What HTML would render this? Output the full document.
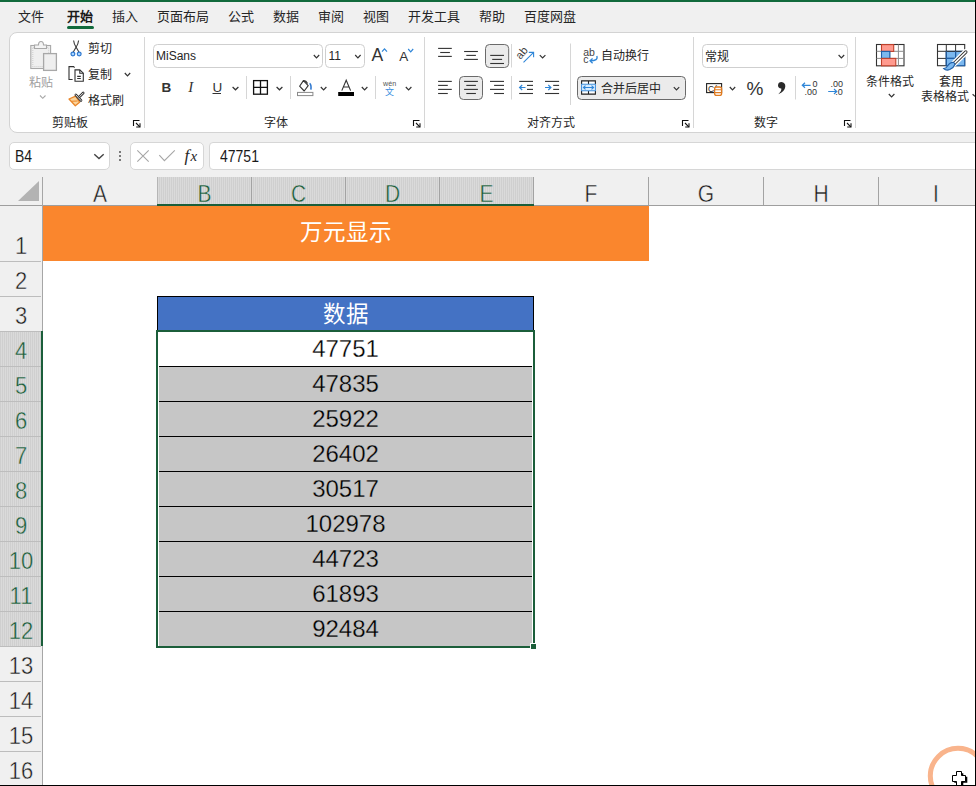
<!DOCTYPE html><html lang="zh-CN"><head><meta charset="utf-8"><style>
*{box-sizing:border-box;margin:0;padding:0}
html,body{width:976px;height:786px;overflow:hidden}
body{position:relative;background:#f0f0f0;font-family:"Liberation Sans",sans-serif;color:#262626}
.ab{position:absolute;white-space:nowrap}
.t{position:absolute;white-space:nowrap;font-size:13px;line-height:16px}
.r{position:absolute;white-space:nowrap;font-size:12px;line-height:16px;color:#262626}
.sep{position:absolute;width:1px;background:#d6d6d6}
.box{position:absolute;background:#fff;border:1px solid #d6d6d6;border-radius:5px}
svg{position:absolute;overflow:visible}
.ch{position:absolute;width:7px;height:4px}
</style></head><body>

<div class="ab" style="left:0;top:0;width:976px;height:2px;background:#116a3c"></div>
<div class="t" style="left:18px;top:9px;">文件</div>
<div class="t" style="left:67px;top:9px;font-weight:bold;color:#1a1a1a;">开始</div>
<div class="t" style="left:112px;top:9px;">插入</div>
<div class="t" style="left:157px;top:9px;">页面布局</div>
<div class="t" style="left:228px;top:9px;">公式</div>
<div class="t" style="left:273px;top:9px;">数据</div>
<div class="t" style="left:318px;top:9px;">审阅</div>
<div class="t" style="left:363px;top:9px;">视图</div>
<div class="t" style="left:408px;top:9px;">开发工具</div>
<div class="t" style="left:479px;top:9px;">帮助</div>
<div class="t" style="left:524px;top:9px;">百度网盘</div>
<div class="ab" style="left:67px;top:26px;width:27px;height:2.5px;border-radius:2px;background:#116a3c"></div>
<div class="ab" style="left:9px;top:32px;width:1000px;height:101px;background:#fff;border:1px solid #d3d3d3;border-radius:8px"></div>
<div class="r" style="left:52px;top:115px">剪贴板</div>
<div class="r" style="left:264px;top:115px">字体</div>
<div class="r" style="left:527px;top:115px">对齐方式</div>
<div class="r" style="left:754px;top:115px">数字</div>
<div class="sep" style="left:144px;top:37px;height:91px"></div>
<div class="sep" style="left:424px;top:37px;height:91px"></div>
<div class="sep" style="left:693px;top:37px;height:91px"></div>
<div class="sep" style="left:855px;top:37px;height:91px"></div>
<svg style="left:0;top:0" width="976" height="140"><g stroke="#a8a8a8" stroke-width="1.1" fill="#efefef"><rect x="30.8" y="45.5" width="19.8" height="23" /><rect x="32.8" y="47.5" width="15.8" height="19" fill="none" stroke="#d0d0d0" stroke-dasharray="1 1"/><path d="M34.5 48.5 V45 H38.5 Q38.5 41.5 41 41.5 Q43.5 41.5 43.5 45 H46.5 V48.5 Z" fill="#f4f4f4"/><rect x="43.6" y="53.6" width="12.8" height="16.8" stroke-width="1.3" fill="#efefef"/></g><path d="M40 95.5 L42.75 98.3 L45.5 95.5" fill="none" stroke="#a8a8a8" stroke-width="1.1"/><g fill="none" stroke="#3c3c3c" stroke-width="1.1"><path d="M73.6 40.5 Q74 44 76 47 Q77.5 49.5 79 52.2"/><path d="M78.6 40.5 Q78.2 44 76.2 47 Q74.7 49.5 73.2 52.2"/></g><g fill="#a9d6ff" stroke="#2f78d0" stroke-width="1.2"><circle cx="72.9" cy="54" r="1.9"/><circle cx="79.2" cy="54" r="1.9"/></g><g fill="none" stroke="#303030" stroke-width="1.1"><path d="M72.6 79.5 H69 V66.6 H73.6 L74.6 67.6"/><path d="M75 69.9 H79.8 L83.3 73.2 V81.3 H75 Z" fill="#fff"/><path d="M79.8 69.9 V73.2 H83.3"/><path d="M77.2 76.4 H80.8 M77.2 78.5 H80.8"/></g><g stroke-linejoin="round"><path d="M69 99 L75.3 105.8 L79.6 102.2 L75.6 96.2 Z" fill="#fbd49b" stroke="#e9862a" stroke-width="1.3"/><path d="M71.5 101.3 L77.6 101.0" stroke="#e9862a" stroke-width="1.1"/><path d="M75.8 94.9 L81 100.5" stroke="#333" stroke-width="2.6" stroke-linecap="round"/><path d="M75.8 94.9 L81 100.5" stroke="#fff" stroke-width="0.9" stroke-linecap="round"/><path d="M79.6 96.6 L83.2 93" stroke="#333" stroke-width="2.6" stroke-linecap="round"/><path d="M79.6 96.6 L83.2 93" stroke="#fff" stroke-width="0.9" stroke-linecap="round"/></g><path d="M124.8 73 L127.5 75.8 L130.2 73" fill="none" stroke="#333" stroke-width="1.2"/><path d="M133.5 126 V120.5 H139.5" fill="none" stroke="#111" stroke-width="1.1"/><path d="M136 123 L139.8 126.8" stroke="#111" stroke-width="1.1"/><path d="M140 123.2 V127 H136.2" fill="none" stroke="#111" stroke-width="1.1"/><rect x="153.5" y="44.5" width="169" height="23" rx="4" fill="#fff" stroke="#cfcfcf"/><path d="M313.8 55 L316.5 57.8 L319.2 55" fill="none" stroke="#333" stroke-width="1.2"/><rect x="325.5" y="44.5" width="39" height="23" rx="4" fill="#fff" stroke="#cfcfcf"/><path d="M355.2 55 L357.9 57.8 L360.59999999999997 55" fill="none" stroke="#333" stroke-width="1.2"/><text x="371.6" y="60.8" font-size="17.5" font-family="Liberation Sans" fill="#333">A</text><path d="M382 51.7 L384.5 48.900000000000006 L387 51.7" fill="none" stroke="#2f86d8" stroke-width="1.2"/><text x="399.2" y="60.8" font-size="13.5" font-family="Liberation Sans" fill="#333">A</text><path d="M408.2 49 L410.7 51.8 L413.2 49" fill="none" stroke="#2f86d8" stroke-width="1.2"/><text x="161.6" y="91.7" font-size="13.5" font-weight="bold" font-family="Liberation Sans" fill="#333">B</text><text x="188.2" y="91.7" font-size="15" font-style="italic" font-family="Liberation Serif" fill="#333">I</text><text x="212.4" y="91.5" font-size="13.5" font-family="Liberation Sans" fill="#333">U</text><path d="M212.5 93.5 H221" stroke="#333" stroke-width="1"/><path d="M232.6 87 L235.5 89.8 L238.4 87" fill="none" stroke="#333" stroke-width="1.2"/><line x1="246.5" y1="76" x2="246.5" y2="99" stroke="#d6d6d6"/><g fill="none" stroke="#111" stroke-width="1.3"><rect x="253.6" y="80.6" width="13.8" height="13.6"/><path d="M260.5 80.6 V94.2 M253.6 87.4 H267.4"/></g><path d="M276.6 87 L279.5 89.8 L282.40000000000003 87" fill="none" stroke="#333" stroke-width="1.2"/><line x1="290.5" y1="76" x2="290.5" y2="99" stroke="#d6d6d6"/><path d="M303.4 80.6 L299.6 86.2 L304.2 91 L308.2 85.6 Z" fill="#fff" stroke="#333" stroke-width="1.1" stroke-linejoin="round"/><path d="M303.4 80.6 Q306 80.3 307.6 83.5" fill="none" stroke="#333" stroke-width="1.1"/><path d="M309.6 83.4 Q311.5 84.6 310.9 89.6" fill="none" stroke="#2f78d0" stroke-width="1.6"/><rect x="297.5" y="92.4" width="15.4" height="3.2" fill="#fff" stroke="#8a8a8a" stroke-width="1"/><path d="M320.8 87 L323.6 89.8 L326.40000000000003 87" fill="none" stroke="#333" stroke-width="1.2"/><path d="M341.8 90.6 L346.2 80.2 L350.6 90.6 M343.4 87 H349" fill="none" stroke="#333" stroke-width="1.1"/><rect x="338.2" y="92" width="15.8" height="4" fill="#000"/><path d="M361.8 87 L364.6 89.8 L367.40000000000003 87" fill="none" stroke="#333" stroke-width="1.2"/><line x1="375.5" y1="76" x2="375.5" y2="99" stroke="#d6d6d6"/><text x="383" y="86.2" font-size="7.2" font-family="Liberation Sans" fill="#555">wén</text><text x="385.2" y="95.2" font-size="9" font-family="Liberation Sans" fill="#3a8ee0">文</text><path d="M405.8 87 L408.6 89.8 L411.40000000000003 87" fill="none" stroke="#333" stroke-width="1.2"/><path d="M413.5 126 V120.5 H419.5" fill="none" stroke="#111" stroke-width="1.1"/><path d="M416 123 L419.8 126.8" stroke="#111" stroke-width="1.1"/><path d="M420 123.2 V127 H416.2" fill="none" stroke="#111" stroke-width="1.1"/><path d="M438.1 48.4 H451.8" stroke="#333" stroke-width="1.1"/><path d="M440.2 52.5 H449.9" stroke="#333" stroke-width="1.1"/><path d="M438.1 56.4 H451.8" stroke="#333" stroke-width="1.1"/><path d="M464.1 51.5 H477.9" stroke="#333" stroke-width="1.1"/><path d="M466.3 55.4 H475.9" stroke="#333" stroke-width="1.1"/><path d="M464.1 59.4 H477.9" stroke="#333" stroke-width="1.1"/><rect x="485.5" y="44.5" width="23.2" height="23" rx="4" fill="#ebebeb" stroke="#6a6a6a" stroke-width="1"/><path d="M490.2 55.4 H504" stroke="#333" stroke-width="1.1"/><path d="M492.2 59.4 H502.1" stroke="#333" stroke-width="1.1"/><path d="M490.2 63.5 H504" stroke="#333" stroke-width="1.1"/><line x1="511.5" y1="44" x2="511.5" y2="67.5" stroke="#d6d6d6"/><text x="0" y="0" font-size="11" font-family="Liberation Sans" fill="#404040" transform="translate(520.5 60) rotate(-50)">ab</text><path d="M523.5 62.4 L533.6 52.4 M528.8 52.4 H533.6 V57.2" fill="none" stroke="#2f86d8" stroke-width="1.1"/><path d="M539.8 55.2 L542.5999999999999 58.0 L545.4 55.2" fill="none" stroke="#333" stroke-width="1.2"/><path d="M438.1 81.4 H451.8" stroke="#333" stroke-width="1.1"/><path d="M438.1 85.4 H447.8" stroke="#333" stroke-width="1.1"/><path d="M438.1 89.4 H451.8" stroke="#333" stroke-width="1.1"/><path d="M438.1 93.5 H447.8" stroke="#333" stroke-width="1.1"/><rect x="459.5" y="76.5" width="23" height="23" rx="4" fill="#ebebeb" stroke="#6a6a6a" stroke-width="1"/><path d="M464.1 81.4 H477.9" stroke="#333" stroke-width="1.1"/><path d="M466.3 85.4 H475.9" stroke="#333" stroke-width="1.1"/><path d="M464.1 89.4 H477.9" stroke="#333" stroke-width="1.1"/><path d="M466.3 93.5 H475.9" stroke="#333" stroke-width="1.1"/><path d="M490 81.4 H504" stroke="#333" stroke-width="1.1"/><path d="M494.1 85.4 H504" stroke="#333" stroke-width="1.1"/><path d="M490 89.4 H504" stroke="#333" stroke-width="1.1"/><path d="M494.1 93.5 H504" stroke="#333" stroke-width="1.1"/><line x1="511.5" y1="76" x2="511.5" y2="99.5" stroke="#d6d6d6"/><path d="M519.2 81.4 H533" stroke="#333" stroke-width="1.1"/><path d="M527 85.4 H533" stroke="#333" stroke-width="1.1"/><path d="M527 89.4 H533" stroke="#333" stroke-width="1.1"/><path d="M519.2 93.5 H533" stroke="#333" stroke-width="1.1"/><path d="M525.5 87.5 H519.8 M522.2 85 L519.6 87.5 L522.2 90" fill="none" stroke="#2f86d8" stroke-width="1.2"/><path d="M545 81.4 H559.1" stroke="#333" stroke-width="1.1"/><path d="M553.2 85.4 H559.1" stroke="#333" stroke-width="1.1"/><path d="M553.2 89.4 H559.1" stroke="#333" stroke-width="1.1"/><path d="M545 93.5 H559.1" stroke="#333" stroke-width="1.1"/><path d="M545 87.5 H550.8 M548.3 85 L550.9 87.5 L548.3 90" fill="none" stroke="#2f86d8" stroke-width="1.2"/><line x1="570.5" y1="43.5" x2="570.5" y2="105" stroke="#d6d6d6"/><text x="583.2" y="55.6" font-size="10.5" font-family="Liberation Sans" fill="#444">ab</text><text x="583.2" y="63.2" font-size="10.5" font-family="Liberation Sans" fill="#444">c</text><path d="M596.8 56 Q598.6 60.8 590.2 60.8 M592.6 58.4 L590 60.8 L592.6 63.2" fill="none" stroke="#2f86d8" stroke-width="1.3"/><rect x="577.5" y="76.5" width="108" height="23" rx="4" fill="#ebebeb" stroke="#6a6a6a" stroke-width="1"/><path d="M581.6 84 V80.9 H595.4 V84 M581.6 91 V94.1 H595.4 V91 M588.5 80.9 V84 M588.5 91 V94.1" fill="#fff" stroke="#222" stroke-width="1.1"/><rect x="581.6" y="84.2" width="13.8" height="6.6" fill="#d8ecff" stroke="#2f86d8" stroke-width="0.9"/><path d="M583.5 87.5 H593.5 M585.5 85.6 L583.4 87.5 L585.5 89.4 M591.5 85.6 L593.6 87.5 L591.5 89.4" fill="none" stroke="#2f86d8" stroke-width="1.1"/><path d="M673.8 87.2 L676.5 90.0 L679.1999999999999 87.2" fill="none" stroke="#333" stroke-width="1.2"/><path d="M682.5 126 V120.5 H688.5" fill="none" stroke="#111" stroke-width="1.1"/><path d="M685 123 L688.8 126.8" stroke="#111" stroke-width="1.1"/><path d="M689 123.2 V127 H685.2" fill="none" stroke="#111" stroke-width="1.1"/><line x1="693.5" y1="37" x2="693.5" y2="128" stroke="#d6d6d6"/><rect x="702.5" y="44.5" width="145" height="23" rx="4" fill="#fff" stroke="#cfcfcf"/><path d="M838.6 55 L841.4 57.8 L844.2 55" fill="none" stroke="#333" stroke-width="1.2"/><rect x="706.6" y="83.6" width="15" height="9" fill="#fff" stroke="#222" stroke-width="1.1"/><text x="708" y="91.6" font-size="8.5" font-family="Liberation Sans" fill="#222">C(</text><rect x="714.6" y="87" width="7" height="8.4" rx="2" fill="#fff" stroke="#e07b20" stroke-width="1.3"/><path d="M714.6 89.8 H721.6 M714.6 92.6 H721.6" stroke="#e07b20" stroke-width="1.1"/><path d="M729.8 87 L732.5 89.8 L735.1999999999999 87" fill="none" stroke="#333" stroke-width="1.2"/><text x="746.6" y="95" font-size="19" font-family="Liberation Sans" fill="#333">%</text><path d="M781.4 81.9 Q785.6 82.2 785.3 86.8 Q784.8 91.5 778.3 94.3 Q781.8 91 781.3 88.6 Q777.9 88.2 778 85.2 Q778.3 81.9 781.4 81.9 Z" fill="#2a2a2a"/><line x1="795.5" y1="76" x2="795.5" y2="99.5" stroke="#d6d6d6"/><path d="M810.6 85.3 H802.4 M805 82.8 L802.3 85.3 L805 87.8" fill="none" stroke="#2f86d8" stroke-width="1.2"/><text x="812.6" y="86.8" font-size="9" font-family="Liberation Sans" fill="#333">0</text><text x="804.6" y="94.7" font-size="9" font-family="Liberation Sans" fill="#333">.00</text><text x="830.4" y="86.8" font-size="9" font-family="Liberation Sans" fill="#333">.00</text><path d="M828.2 91.5 H836.6 M834 89 L836.7 91.5 L834 94" fill="none" stroke="#2f86d8" stroke-width="1.2"/><text x="835.2" y="94.7" font-size="9" font-family="Liberation Sans" fill="#333">.0</text><path d="M844.5 126 V120.5 H850.5" fill="none" stroke="#111" stroke-width="1.1"/><path d="M847 123 L850.8 126.8" stroke="#111" stroke-width="1.1"/><path d="M851 123.2 V127 H847.2" fill="none" stroke="#111" stroke-width="1.1"/><line x1="855.5" y1="37" x2="855.5" y2="128" stroke="#d6d6d6"/><g stroke-width="1"><rect x="876.5" y="44.5" width="27.5" height="21.3" fill="#fff" stroke="#333" stroke-width="1.1"/><path d="M889.8 44.5 V65.8 M898.4 44.5 V65.8 M876.5 51.3 H904 M876.5 58.4 H904" stroke="#8a8a8a"/><rect x="881.5" y="44.6" width="12.2" height="6.8" fill="#ff9a8e" stroke="#c0402a" stroke-width="1.1"/><rect x="881.5" y="51.4" width="8.3" height="7" fill="#7bb8ef" stroke="#1f5fa8" stroke-width="1.1"/><rect x="881.5" y="58.4" width="14.3" height="7.4" fill="#ff9a8e" stroke="#c0402a" stroke-width="1.1"/></g><path d="M888.8 94 L891.5999999999999 96.8 L894.4 94" fill="none" stroke="#333" stroke-width="1.2"/><g><rect x="937.5" y="44.5" width="27.2" height="21.2" fill="#fff" stroke="#333" stroke-width="1.1"/><rect x="946.3" y="51.3" width="18.4" height="14.4" fill="#7bb8ef" stroke="#1f5fa8" stroke-width="1.1"/><path d="M946.3 44.5 V65.7 M955.6 44.5 V65.7 M937.5 51.3 H964.7 M937.5 58.4 H964.7" stroke="#333" stroke-width="1"/><path d="M946.3 51.3 V65.7 M955.6 51.3 V65.7 M946.3 58.4 H964.7" stroke="#1f5fa8" stroke-width="1.1"/><path d="M965.8 52 L954 63.6" stroke="#fff" stroke-width="6" stroke-linecap="round"/><path d="M965.8 52 L954 63.6" stroke="#333" stroke-width="3.4" stroke-linecap="round"/><path d="M965.8 52 L954 63.6" stroke="#fff" stroke-width="1.6" stroke-linecap="round"/><path d="M953.8 62.4 Q950 62 947.5 66 Q946 68.5 943.8 68.6 Q946 71 949.8 69.6 Q953.6 68 955 64.2 Z" fill="#7bb8ef" stroke="#1f5fa8" stroke-width="1.1"/></g><path d="M972.6 94.2 L975 96.4" stroke="#333" stroke-width="1.2"/></svg>
<div class="r" style="left:29px;top:75px;color:#a0a0a0;">粘贴</div>
<div class="r" style="left:88px;top:41px;">剪切</div>
<div class="r" style="left:88px;top:67px;">复制</div>
<div class="r" style="left:88px;top:93px;">格式刷</div>
<div class="r" style="left:601px;top:48px;">自动换行</div>
<div class="r" style="left:601px;top:81px;">合并后居中</div>
<div class="r" style="left:705px;top:49px;">常规</div>
<div class="r" style="left:866px;top:74px;">条件格式</div>
<div class="r" style="left:939px;top:74px;">套用</div>
<div class="r" style="left:921px;top:89px;">表格格式</div>
<div class="r" style="left:156px;top:48px;font-size:12px;color:#262626">MiSans</div>
<div class="r" style="left:328.5px;top:48px;font-size:12px;color:#262626">11</div>
<div class="box" style="left:9px;top:142px;width:101px;height:28px"></div>
<div class="ab" style="left:15px;top:146px;font-size:14px;line-height:18px;color:#1a1a1a;transform:scaleY(1.12);transform-origin:0 0">B4</div>
<div class="box" style="left:130px;top:142px;width:74px;height:28px"></div>
<div class="box" style="left:209px;top:142px;width:800px;height:28px;border-radius:4px 0 0 4px"></div>
<div class="ab" style="left:220px;top:146px;font-size:14px;line-height:18px;color:#1a1a1a;transform:scaleY(1.12);transform-origin:0 0">47751</div>
<svg style="left:0;top:140px" width="976" height="40"><path d="M94.3 14.2 L99 18.6 L103.7 14.2" fill="none" stroke="#444" stroke-width="1.4"/><rect x="119" y="11" width="2" height="2" fill="#7a7a7a"/><rect x="119" y="15" width="2" height="2" fill="#7a7a7a"/><rect x="119" y="19" width="2" height="2" fill="#7a7a7a"/><path d="M137.3 10.3 L148.7 21.7 M148.7 10.3 L137.3 21.7" stroke="#a6a6a6" stroke-width="1.1"/><path d="M159.3 15.2 L164.4 20.6 L174.8 10.3" fill="none" stroke="#a6a6a6" stroke-width="1.1"/><text x="184.5" y="20.8" font-size="17" font-style="italic" font-family="Liberation Serif" fill="#262626">f</text><text x="190.6" y="20.8" font-size="15" font-style="italic" font-family="Liberation Serif" fill="#262626">x</text></svg>
<div class="ab" style="left:43px;top:206px;width:933px;height:580px;background:#fff"></div>
<div class="ab" style="left:157px;top:177px;width:377px;height:28px;background:repeating-linear-gradient(90deg,#cfcfcf 0 1px,#dadada 1px 2px)"></div>
<div class="ab" style="left:0;top:331px;width:42px;height:315px;background:repeating-linear-gradient(90deg,#cfcfcf 0 1px,#dadada 1px 2px)"></div>
<div class="ab" style="left:157px;top:177px;width:1px;height:28px;background:#b5b5b5"></div>
<div class="ab" style="left:251px;top:177px;width:1px;height:28px;background:#a3a3a3"></div>
<div class="ab" style="left:345px;top:177px;width:1px;height:28px;background:#a3a3a3"></div>
<div class="ab" style="left:439px;top:177px;width:1px;height:28px;background:#a3a3a3"></div>
<div class="ab" style="left:533px;top:177px;width:1px;height:28px;background:#a3a3a3"></div>
<div class="ab" style="left:648px;top:177px;width:1px;height:28px;background:#a3a3a3"></div>
<div class="ab" style="left:763px;top:177px;width:1px;height:28px;background:#a3a3a3"></div>
<div class="ab" style="left:878px;top:177px;width:1px;height:28px;background:#a3a3a3"></div>
<div class="ab" style="left:0;top:205px;width:976px;height:1px;background:#9e9e9e"></div>
<div class="ab" style="left:157px;top:204px;width:377px;height:2px;background:#1b5e3a"></div>
<div class="ab" style="left:42px;top:177px;width:1px;height:609px;background:#a6a6a6"></div>
<div class="ab" style="left:41px;top:331px;width:2px;height:315px;background:#1b5e3a"></div>
<div class="ab" style="left:0;top:261px;width:41px;height:1px;background:#bdbdbd"></div>
<div class="ab" style="left:0;top:296px;width:41px;height:1px;background:#bdbdbd"></div>
<div class="ab" style="left:0;top:331px;width:41px;height:1px;background:#bdbdbd"></div>
<div class="ab" style="left:0;top:366px;width:41px;height:1px;background:#bdbdbd"></div>
<div class="ab" style="left:0;top:401px;width:41px;height:1px;background:#bdbdbd"></div>
<div class="ab" style="left:0;top:436px;width:41px;height:1px;background:#bdbdbd"></div>
<div class="ab" style="left:0;top:471px;width:41px;height:1px;background:#bdbdbd"></div>
<div class="ab" style="left:0;top:506px;width:41px;height:1px;background:#bdbdbd"></div>
<div class="ab" style="left:0;top:541px;width:41px;height:1px;background:#bdbdbd"></div>
<div class="ab" style="left:0;top:576px;width:41px;height:1px;background:#bdbdbd"></div>
<div class="ab" style="left:0;top:611px;width:41px;height:1px;background:#bdbdbd"></div>
<div class="ab" style="left:0;top:646px;width:41px;height:1px;background:#bdbdbd"></div>
<div class="ab" style="left:0;top:681px;width:41px;height:1px;background:#bdbdbd"></div>
<div class="ab" style="left:0;top:716px;width:41px;height:1px;background:#bdbdbd"></div>
<div class="ab" style="left:0;top:751px;width:41px;height:1px;background:#bdbdbd"></div>
<svg style="left:0;top:0" width="976" height="786"><polygon points="18,201 39,181 39,201" fill="#b3b3b3"/></svg>
<div class="ab" style="left:43px;top:180px;width:114px;text-align:center;font-size:21px;line-height:24px;color:#1a1a1a;transform:scaleY(1.15);transform-origin:50% 0;-webkit-text-stroke:0.4px #f0f0f0;paint-order:normal">A</div>
<div class="ab" style="left:158px;top:180px;width:93px;text-align:center;font-size:21px;line-height:24px;color:#1b5e3a;transform:scaleY(1.15);transform-origin:50% 0;-webkit-text-stroke:0.4px #d7d7d7;paint-order:normal">B</div>
<div class="ab" style="left:252px;top:180px;width:93px;text-align:center;font-size:21px;line-height:24px;color:#1b5e3a;transform:scaleY(1.15);transform-origin:50% 0;-webkit-text-stroke:0.4px #d7d7d7;paint-order:normal">C</div>
<div class="ab" style="left:346px;top:180px;width:93px;text-align:center;font-size:21px;line-height:24px;color:#1b5e3a;transform:scaleY(1.15);transform-origin:50% 0;-webkit-text-stroke:0.4px #d7d7d7;paint-order:normal">D</div>
<div class="ab" style="left:440px;top:180px;width:93px;text-align:center;font-size:21px;line-height:24px;color:#1b5e3a;transform:scaleY(1.15);transform-origin:50% 0;-webkit-text-stroke:0.4px #d7d7d7;paint-order:normal">E</div>
<div class="ab" style="left:534px;top:180px;width:114px;text-align:center;font-size:21px;line-height:24px;color:#1a1a1a;transform:scaleY(1.15);transform-origin:50% 0;-webkit-text-stroke:0.4px #f0f0f0;paint-order:normal">F</div>
<div class="ab" style="left:649px;top:180px;width:114px;text-align:center;font-size:21px;line-height:24px;color:#1a1a1a;transform:scaleY(1.15);transform-origin:50% 0;-webkit-text-stroke:0.4px #f0f0f0;paint-order:normal">G</div>
<div class="ab" style="left:764px;top:180px;width:114px;text-align:center;font-size:21px;line-height:24px;color:#1a1a1a;transform:scaleY(1.15);transform-origin:50% 0;-webkit-text-stroke:0.4px #f0f0f0;paint-order:normal">H</div>
<div class="ab" style="left:879px;top:180px;width:114px;text-align:center;font-size:21px;line-height:24px;color:#1a1a1a;transform:scaleY(1.15);transform-origin:50% 0;-webkit-text-stroke:0.4px #f0f0f0;paint-order:normal">I</div>
<div class="ab" style="left:0;top:233px;width:42px;text-align:center;font-size:22px;line-height:24px;color:#1a1a1a;transform:scaleY(1.1);transform-origin:50% 0;-webkit-text-stroke:0.4px #f0f0f0">1</div>
<div class="ab" style="left:0;top:268px;width:42px;text-align:center;font-size:22px;line-height:24px;color:#1a1a1a;transform:scaleY(1.1);transform-origin:50% 0;-webkit-text-stroke:0.4px #f0f0f0">2</div>
<div class="ab" style="left:0;top:303px;width:42px;text-align:center;font-size:22px;line-height:24px;color:#1a1a1a;transform:scaleY(1.1);transform-origin:50% 0;-webkit-text-stroke:0.4px #f0f0f0">3</div>
<div class="ab" style="left:0;top:338px;width:42px;text-align:center;font-size:22px;line-height:24px;color:#1b5e3a;transform:scaleY(1.1);transform-origin:50% 0;-webkit-text-stroke:0.4px #d7d7d7">4</div>
<div class="ab" style="left:0;top:373px;width:42px;text-align:center;font-size:22px;line-height:24px;color:#1b5e3a;transform:scaleY(1.1);transform-origin:50% 0;-webkit-text-stroke:0.4px #d7d7d7">5</div>
<div class="ab" style="left:0;top:408px;width:42px;text-align:center;font-size:22px;line-height:24px;color:#1b5e3a;transform:scaleY(1.1);transform-origin:50% 0;-webkit-text-stroke:0.4px #d7d7d7">6</div>
<div class="ab" style="left:0;top:443px;width:42px;text-align:center;font-size:22px;line-height:24px;color:#1b5e3a;transform:scaleY(1.1);transform-origin:50% 0;-webkit-text-stroke:0.4px #d7d7d7">7</div>
<div class="ab" style="left:0;top:478px;width:42px;text-align:center;font-size:22px;line-height:24px;color:#1b5e3a;transform:scaleY(1.1);transform-origin:50% 0;-webkit-text-stroke:0.4px #d7d7d7">8</div>
<div class="ab" style="left:0;top:513px;width:42px;text-align:center;font-size:22px;line-height:24px;color:#1b5e3a;transform:scaleY(1.1);transform-origin:50% 0;-webkit-text-stroke:0.4px #d7d7d7">9</div>
<div class="ab" style="left:0;top:548px;width:42px;text-align:center;font-size:22px;line-height:24px;color:#1b5e3a;transform:scaleY(1.1);transform-origin:50% 0;-webkit-text-stroke:0.4px #d7d7d7">10</div>
<div class="ab" style="left:0;top:583px;width:42px;text-align:center;font-size:22px;line-height:24px;color:#1b5e3a;transform:scaleY(1.1);transform-origin:50% 0;-webkit-text-stroke:0.4px #d7d7d7">11</div>
<div class="ab" style="left:0;top:618px;width:42px;text-align:center;font-size:22px;line-height:24px;color:#1b5e3a;transform:scaleY(1.1);transform-origin:50% 0;-webkit-text-stroke:0.4px #d7d7d7">12</div>
<div class="ab" style="left:0;top:653px;width:42px;text-align:center;font-size:22px;line-height:24px;color:#1a1a1a;transform:scaleY(1.1);transform-origin:50% 0;-webkit-text-stroke:0.4px #f0f0f0">13</div>
<div class="ab" style="left:0;top:688px;width:42px;text-align:center;font-size:22px;line-height:24px;color:#1a1a1a;transform:scaleY(1.1);transform-origin:50% 0;-webkit-text-stroke:0.4px #f0f0f0">14</div>
<div class="ab" style="left:0;top:723px;width:42px;text-align:center;font-size:22px;line-height:24px;color:#1a1a1a;transform:scaleY(1.1);transform-origin:50% 0;-webkit-text-stroke:0.4px #f0f0f0">15</div>
<div class="ab" style="left:0;top:758px;width:42px;text-align:center;font-size:22px;line-height:24px;color:#1a1a1a;transform:scaleY(1.1);transform-origin:50% 0;-webkit-text-stroke:0.4px #f0f0f0">16</div>
<div class="ab" style="left:43px;top:206px;width:606px;height:55px;background:#fa862d"></div>
<div class="ab" style="left:43px;top:219px;width:605px;text-align:center;font-size:22.5px;line-height:28px;font-weight:500;color:#fff">万元显示</div>
<div class="ab" style="left:157px;top:296px;width:377px;height:36px;background:#4472c4;border:1px solid #000;border-bottom:none"></div>
<div class="ab" style="left:157px;top:301px;width:377px;text-align:center;font-size:22.5px;line-height:28px;font-weight:500;color:#fff">数据</div>
<div class="ab" style="left:159px;top:332px;width:373px;height:35px;background:#fff"></div>
<div class="ab" style="left:158px;top:335px;width:375px;text-align:center;font-size:24px;line-height:28px;letter-spacing:0px;color:#000;-webkit-text-stroke:0.3px #fff">47751</div>
<div class="ab" style="left:159px;top:367px;width:373px;height:35px;background:#c6c6c6"></div>
<div class="ab" style="left:159px;top:366px;width:373px;height:1px;background:#000"></div>
<div class="ab" style="left:158px;top:370px;width:375px;text-align:center;font-size:24px;line-height:28px;letter-spacing:0px;color:#000;-webkit-text-stroke:0.3px #c6c6c6">47835</div>
<div class="ab" style="left:159px;top:402px;width:373px;height:35px;background:#c6c6c6"></div>
<div class="ab" style="left:159px;top:401px;width:373px;height:1px;background:#000"></div>
<div class="ab" style="left:158px;top:405px;width:375px;text-align:center;font-size:24px;line-height:28px;letter-spacing:0px;color:#000;-webkit-text-stroke:0.3px #c6c6c6">25922</div>
<div class="ab" style="left:159px;top:437px;width:373px;height:35px;background:#c6c6c6"></div>
<div class="ab" style="left:159px;top:436px;width:373px;height:1px;background:#000"></div>
<div class="ab" style="left:158px;top:440px;width:375px;text-align:center;font-size:24px;line-height:28px;letter-spacing:0px;color:#000;-webkit-text-stroke:0.3px #c6c6c6">26402</div>
<div class="ab" style="left:159px;top:472px;width:373px;height:35px;background:#c6c6c6"></div>
<div class="ab" style="left:159px;top:471px;width:373px;height:1px;background:#000"></div>
<div class="ab" style="left:158px;top:475px;width:375px;text-align:center;font-size:24px;line-height:28px;letter-spacing:0px;color:#000;-webkit-text-stroke:0.3px #c6c6c6">30517</div>
<div class="ab" style="left:159px;top:507px;width:373px;height:35px;background:#c6c6c6"></div>
<div class="ab" style="left:159px;top:506px;width:373px;height:1px;background:#000"></div>
<div class="ab" style="left:158px;top:510px;width:375px;text-align:center;font-size:24px;line-height:28px;letter-spacing:0px;color:#000;-webkit-text-stroke:0.3px #c6c6c6">102978</div>
<div class="ab" style="left:159px;top:542px;width:373px;height:35px;background:#c6c6c6"></div>
<div class="ab" style="left:159px;top:541px;width:373px;height:1px;background:#000"></div>
<div class="ab" style="left:158px;top:545px;width:375px;text-align:center;font-size:24px;line-height:28px;letter-spacing:0px;color:#000;-webkit-text-stroke:0.3px #c6c6c6">44723</div>
<div class="ab" style="left:159px;top:577px;width:373px;height:35px;background:#c6c6c6"></div>
<div class="ab" style="left:159px;top:576px;width:373px;height:1px;background:#000"></div>
<div class="ab" style="left:158px;top:580px;width:375px;text-align:center;font-size:24px;line-height:28px;letter-spacing:0px;color:#000;-webkit-text-stroke:0.3px #c6c6c6">61893</div>
<div class="ab" style="left:159px;top:612px;width:373px;height:35px;background:#c6c6c6"></div>
<div class="ab" style="left:159px;top:611px;width:373px;height:1px;background:#000"></div>
<div class="ab" style="left:158px;top:615px;width:375px;text-align:center;font-size:24px;line-height:28px;letter-spacing:0px;color:#000;-webkit-text-stroke:0.3px #c6c6c6">92484</div>
<div class="ab" style="left:156px;top:330px;width:379px;height:318px;border:2px solid #1b5e3a"></div>
<div class="ab" style="left:530px;top:643px;width:7px;height:7px;background:#fff"></div>
<div class="ab" style="left:531px;top:644px;width:5px;height:5px;background:#1b5e3a"></div>
<svg style="left:0;top:0" width="976" height="786"><circle cx="958" cy="776" r="27.7" fill="none" stroke="#f9b48c" stroke-width="5"/><path d="M957.5 772.5 H962.5 V776 H966.5 V782 H962.5 V786 H957.5 V782 H953.5 V776 H957.5 Z" fill="#000" transform="translate(0.8 0.8)"/><path d="M956.5 771.5 H961.5 V775.5 H965.5 V781.5 H961.5 V786 H956.5 V781.5 H952.5 V775.5 H956.5 Z" fill="#fff" stroke="#000" stroke-width="1"/></svg>
<div class="ab" style="left:975px;top:0;width:1px;height:786px;background:#000"></div>
<div class="ab" style="left:0;top:785px;width:976px;height:1px;background:#000"></div>
</body></html>
